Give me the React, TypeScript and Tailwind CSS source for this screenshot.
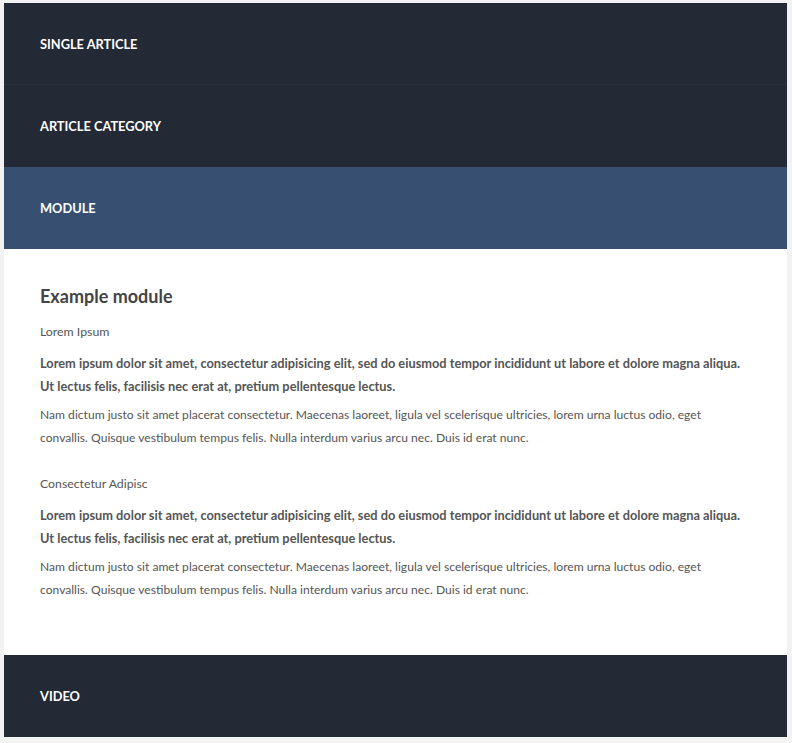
import React from "react";

const font = { fontFamily: "Lato, 'Noto Sans', sans-serif" };

function Bar({ label, active, border }: { label: string; active?: boolean; border?: boolean }) {
  return (
    <div
      className={
        "h-[82px] flex items-center px-9 pt-[2px] text-[12.8px] font-bold text-white uppercase " +
        (active ? "bg-[#375071]" : "bg-[#232a35]") +
        (border ? " border-b border-[#2b323d]" : "")
      }
    >
      {label}
    </div>
  );
}

function Block({ title }: { title: string }) {
  return (
    <div>
      <div className="text-[12.3px] text-[#555] leading-[23px]">{title}</div>
      <p className="mt-[9px] text-[12.8px] font-bold text-[#555] leading-[23px]">
        Lorem ipsum dolor sit amet, consectetur adipisicing elit, sed do eiusmod tempor incididunt ut labore et dolore magna aliqua. Ut lectus felis, facilisis nec erat at, pretium pellentesque lectus.
      </p>
      <p className="mt-[5px] text-[12.1px] text-[#555] leading-[23px]">
        Nam dictum justo sit amet placerat consectetur. Maecenas laoreet, ligula vel scelerisque ultricies, lorem urna luctus odio, eget convallis. Quisque vestibulum tempus felis. Nulla interdum varius arcu nec. Duis id erat nunc.
      </p>
    </div>
  );
}

export default function App() {
  return (
    <div className="min-h-[743px] bg-[#f2f2f2] pt-[3px] pl-[4px] pr-[5px] pb-[6px]" style={font}>
      <div className="flex flex-col">
        <Bar label="Single Article" border />
        <Bar label="Article Category" />
        <Bar label="Module" active />
        <div className="bg-white px-9 pt-[34px] pb-[54px]">
          <h3 className="text-[18px] font-bold text-[#444] leading-[26px]">Example module</h3>
          <div className="mt-[11px] flex flex-col gap-[23px]">
            <Block title="Lorem Ipsum" />
            <Block title="Consectetur Adipisc" />
          </div>
        </div>
        <Bar label="Video" />
      </div>
    </div>
  );
}
